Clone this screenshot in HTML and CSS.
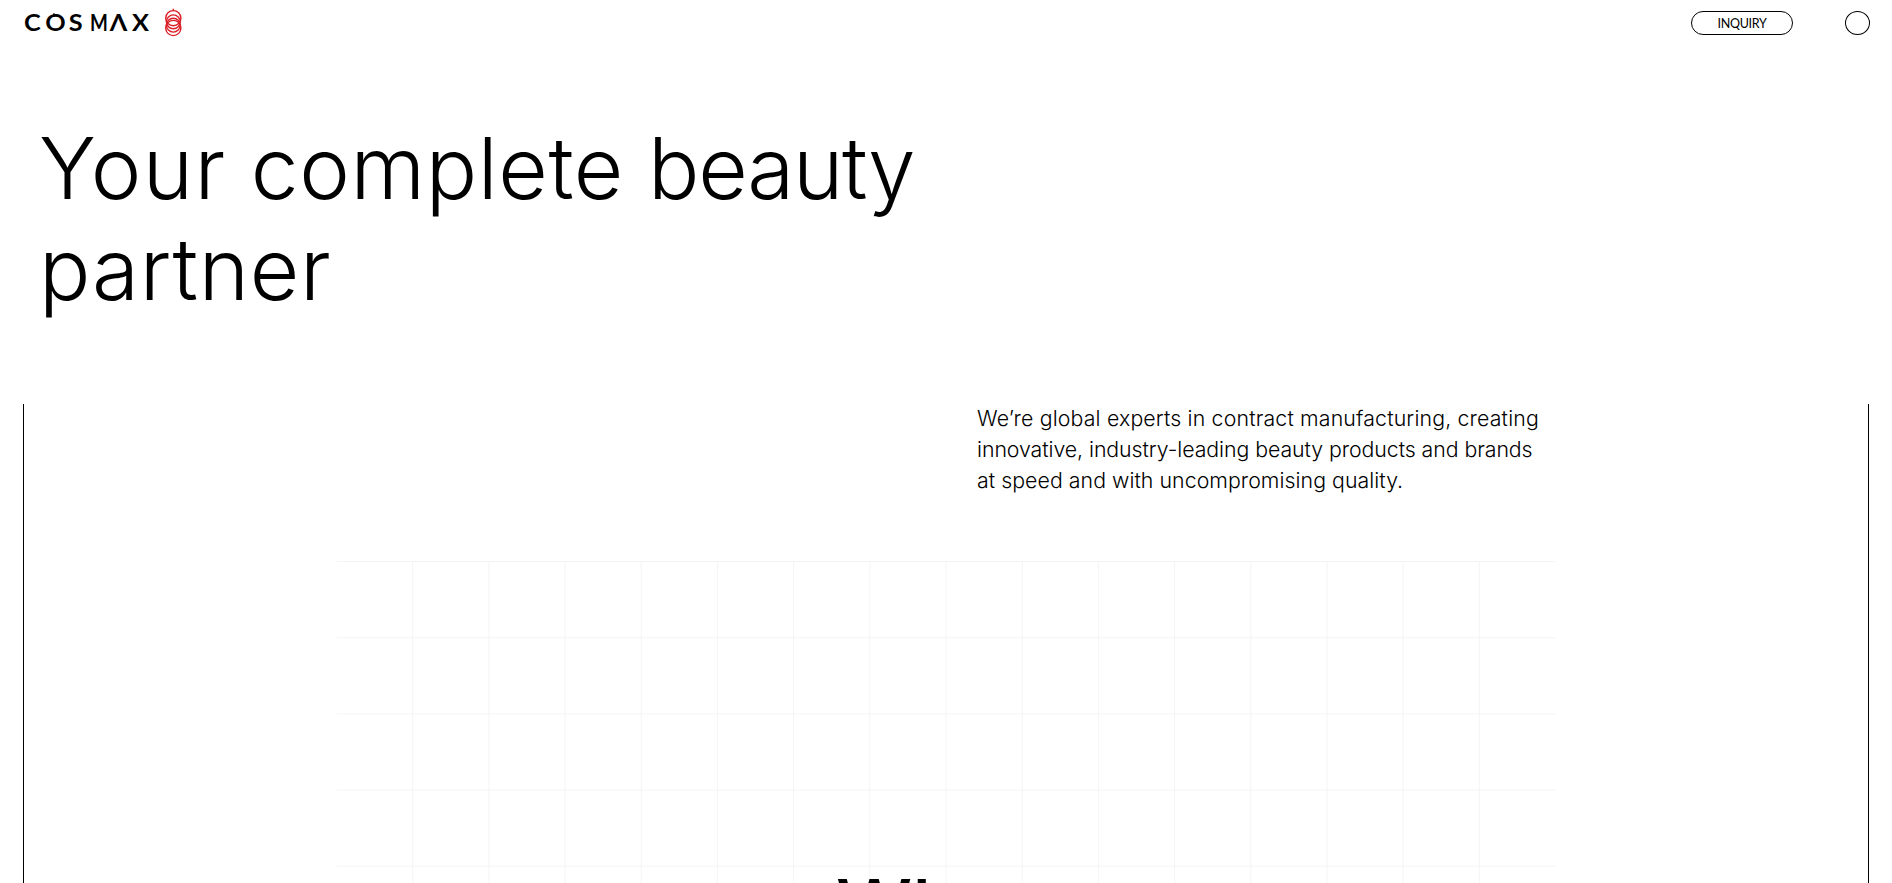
FILE: index.html
```html
<!DOCTYPE html>
<html lang="en">
<head>
    <meta charset="UTF-8">
    <meta name="viewport" content="width=device-width, initial-scale=1.0">
    <title>COSMAX</title>
    <link rel="stylesheet" href="styles.css">
</head>
<body>
    <header class="header">
        <a class="logo" href="#" aria-label="COSMAX">
            <svg width="160" height="36" viewBox="24 5 160 36">
                <g class="logo-text">
                    <text y="31" transform="scale(1.15 1)" x="20.9 39.4 59.8">COS</text>
                    <text y="31" transform="translate(90 0) scale(.86 1)">M</text>
                    <text y="31" transform="scale(1.15 1)" x="95.4 114.8">ΛX</text>
                </g>
                <path d="M54 13.5v3" stroke="#000" stroke-width="2"/>
                <g fill="none" stroke="#dc1f26" stroke-width="1.4">
                    <circle cx="173.3" cy="18.2" r="7.6"/>
                    <circle cx="173.3" cy="21.8" r="6.9"/>
                    <circle cx="173.3" cy="25.2" r="6.9"/>
                    <circle cx="173.3" cy="28" r="7.6"/>
                    <path d="M173.3 8.8v2"/>
                </g>
            </svg>
        </a>
        <nav class="nav">
            <a class="inquiry" href="#">INQUIRY</a>
            <button class="menu" aria-label="Menu"></button>
        </nav>
    </header>

    <main>
        <h1 class="title"><span class="word-your">Your</span> <span class="word-complete">complete</span> <span class="word-beauty">beauty</span><br><span class="word-partner">partner</span></h1>
        <section class="intro">
            <p class="intro-text"><span class="line-wide">We’re global experts in contract manufacturing, creating</span><br><span class="line-tight">innovative, industry-leading beauty products and brands</span><br>at speed and with uncompromising quality.</p>
            <div class="grid">
                <h2 class="grid-title">What</h2>
            </div>
        </section>
    </main>
</body>
</html>
```
FILE: styles.css
```css
* {
    box-sizing: border-box;
}

body {
    margin: 0;
    height: 100vh;
    overflow: hidden;
    background: #fff;
    color: #000;
    font-family: Inter, "Liberation Sans", sans-serif;
}

.header {
    display: flex;
    justify-content: space-between;
    height: 46px;
    padding: 5px 22px 0 24px;
}

.logo svg {
    display: block;
}

.logo-text {
    font: 700 22px Lato, sans-serif;
}

.nav {
    display: flex;
    gap: 52px;
    padding-top: 6px;
}

.inquiry {
    display: flex;
    align-items: center;
    justify-content: center;
    width: 102px;
    height: 24px;
    border: 1px solid #000;
    border-radius: 12px;
    color: #000;
    font: 400 12.5px Lato, sans-serif;
    letter-spacing: -0.3px;
    text-decoration: none;
}

.menu {
    width: 25px;
    height: 24px;
    padding: 0;
    border: 1px solid #000;
    border-radius: 50%;
    background: none;
}

.title {
    margin: 0;
    padding: 72px 0 0 39px;
    height: 358px;
    font-size: 85.5px;
    font-weight: 300;
    line-height: 101px;
}

.word-your {
    letter-spacing: 1.4px;
}

.word-complete {
    letter-spacing: 0.6px;
}

.word-beauty {
    letter-spacing: -1.3px;
}

.word-partner {
    letter-spacing: 0.7px;
}

.intro {
    height: 479px;
    margin: 0 23px;
    border: solid #000;
    border-width: 0 1px;
}

.intro-text {
    margin: 0;
    padding-left: 953px;
    height: 157px;
    font-size: 21.3px;
    font-weight: 300;
    line-height: 31px;
    letter-spacing: 0.05px;
    transform: translateY(-1px);
}

.line-wide {
    letter-spacing: 0.16px;
}

.line-tight {
    letter-spacing: -0.06px;
}

.grid {
    width: 1218px;
    height: 322px;
    margin: 0 auto;
    overflow: hidden;
    background-image:
        linear-gradient(#f4f4f4 1px, transparent 1px),
        linear-gradient(90deg, transparent 75.2px, #f4f4f4 75.2px);
    background-size: 76.2px 76.2px;
}

.grid-title {
    margin: 0;
    padding: 299px 0 0 499px;
    font-size: 76px;
    font-weight: 500;
    line-height: 92px;
}
```
